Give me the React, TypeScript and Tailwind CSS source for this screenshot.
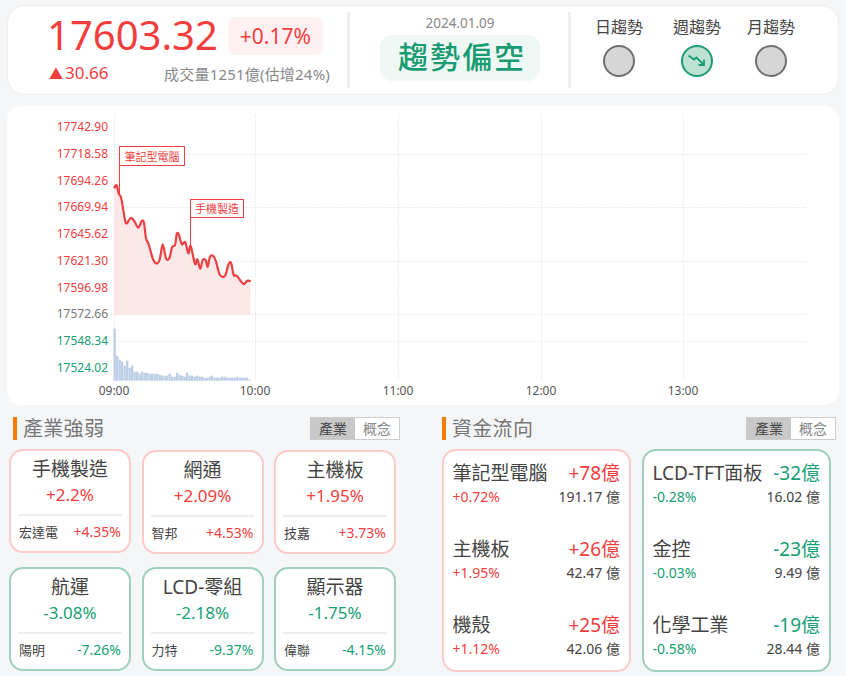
import React from 'react';

const RED = 'text-[#f23d3d]';
const GREEN = 'text-[#16a075]';

const linePts: [number, number][] = [
  [222, 235], [230, 226], [236, 250], [243, 262], [250, 300], [258, 340], [272, 324], [282, 332], [295, 353], [305, 333],
  [312, 338], [318, 385], [326, 403], [340, 450], [352, 460], [360, 445], [368, 403], [378, 445], [388, 445], [396, 412],
  [405, 405], [411, 370], [418, 378], [425, 403], [436, 397], [445, 430], [452, 408], [465, 462], [472, 448], [481, 476],
  [488, 450], [497, 450], [503, 470], [510, 440], [520, 438], [528, 455], [540, 495], [555, 497], [565, 465], [573, 458],
  [581, 495], [590, 497], [610, 522], [622, 512], [632, 514],
];
// zoomed coords -> page coords
const pts = linePts.map(([x, y]) => [40 + x / 3, 110 + y / 3]);

// smooth the price line a little (catmull-rom)
const f = (n: number) => n.toFixed(1);
const linePath = pts.reduce((d, p, i) => {
  if (i === 0) return `M${f(p[0])} ${f(p[1])}`;
  const p0 = pts[i - 2] || pts[i - 1];
  const p1 = pts[i - 1];
  const p3 = pts[i + 1] || p;
  const c1x = p1[0] + (p[0] - p0[0]) / 6;
  const c1y = p1[1] + (p[1] - p0[1]) / 6;
  const c2x = p[0] - (p3[0] - p1[0]) / 6;
  const c2y = p[1] - (p3[1] - p1[1]) / 6;
  return `${d} C${f(c1x)} ${f(c1y)} ${f(c2x)} ${f(c2y)} ${f(p[0])} ${f(p[1])}`;
}, '');
const areaPath = `${linePath} L250.7 315 L114 315 Z`;

const volumes = [52, 25, 21, 19, 15, 20, 13, 15, 9, 9, 7, 9, 8, 8, 7, 7, 7, 7, 6, 5, 5, 5, 7, 4, 4, 8, 6, 5, 4, 8, 5, 5, 4, 5, 4, 4, 3, 3, 4, 5, 3, 3, 3, 4, 4, 3, 3, 3, 3, 4, 3, 3, 3, 3, 1];

const yLabels = [
  ['17742.90', 126, '#f23d3d'], ['17718.58', 153, '#f23d3d'], ['17694.26', 180, '#f23d3d'], ['17669.94', 206, '#f23d3d'],
  ['17645.62', 233, '#f23d3d'], ['17621.30', 260, '#f23d3d'], ['17596.98', 287, '#f23d3d'], ['17572.66', 313, '#777777'],
  ['17548.34', 340, '#16a075'], ['17524.02', 367, '#16a075'],
] as const;

const timeLabels: [number, string][] = [[114, '09:00'], [255, '10:00'], [398, '11:00'], [541, '12:00'], [683, '13:00']];

function Chart() {
  return (
    <svg width="832" height="299" viewBox="7 106 832 299" className="block">
      {timeLabels.map(([x]) => (
        <line key={x} x1={x + 0.5} x2={x + 0.5} y1={114} y2={381} stroke="#ececec" strokeDasharray="2 1" />
      ))}
      {[154, 207, 261, 314, 341].map((y) => (
        <line key={y} x1={114} x2={807} y1={y + 0.5} y2={y + 0.5} stroke="#ececec" strokeDasharray="2 1" />
      ))}
      <path d={areaPath} fill="#fce8e8" />
      <path d={linePath} fill="none" stroke="#ee4040" strokeWidth="2.2" strokeLinejoin="round" />
      {volumes.map((h, i) => (
        <rect key={i} x={113.5 + i * 2.5} y={380.7 - h} width={2.3} height={h} fill="#bdcde6" />
      ))}
      {yLabels.map(([t, y, c]) => (
        <text key={t} x={108} y={y + 4.5} textAnchor="end" fontSize="12" fill={c}>{t}</text>
      ))}
      {timeLabels.map(([x, t]) => (
        <text key={t} x={x} y={395} textAnchor="middle" fontSize="12" fill="#555">{t}</text>
      ))}

      <line x1={119.5} x2={119.5} y1={165} y2={194} stroke="#ee4040" />
      <rect x={119.5} y={146.5} width={65} height={19} fill="#fff" stroke="#ee4040" />
      <text x={152} y={160.5} textAnchor="middle" fontSize="11" fill="#ee4040">筆記型電腦</text>
      <line x1={190.5} x2={190.5} y1={218} y2={248} stroke="#ee4040" />
      <rect x={190.5} y={199.5} width={53} height={18} fill="#fff" stroke="#ee4040" />
      <text x={217} y={213} textAnchor="middle" fontSize="11" fill="#ee4040">手機製造</text>
    </svg>
  );
}

function Trend({ label, active, className = '' }: { label: string; active?: boolean; className?: string }) {
  return (
    <div className={`flex flex-col items-center w-[74px] ${className}`}>
      <div className="text-[16px] leading-[20px] text-[#444]">{label}</div>
      <div className={`mt-[8px] w-[32px] h-[32px] rounded-full border-2 flex items-center justify-center ${active ? 'border-[#1a9c72] bg-[#bde2d3]' : 'border-[#6f6f6f] bg-[#d6d6d6]'}`}>
        {active && (
          <svg width="20" height="16" viewBox="0 0 20 16" fill="none" stroke="#1a9c72" strokeWidth="1.8">
            <path d="M1.5 2.5 L7 6.5 L9.5 4.5 L16.5 11.5" />
            <path d="M17 6.5 V12 H11.5" />
          </svg>
        )}
      </div>
    </div>
  );
}

function Tabs() {
  return (
    <div className="flex w-[90px] h-[23px] border border-[#ccc] text-[14px] leading-[21px] text-center">
      <div className="flex-1 bg-[#c8c8c8] text-[#444]">產業</div>
      <div className="flex-1 bg-white text-[#888]">概念</div>
    </div>
  );
}

function Heading({ title }: { title: string }) {
  return (
    <div className="flex items-center h-[23px] border-l-[4px] border-[#f57c00] pl-[6px] text-[20px] text-[#777] tracking-[0.3px]">{title}</div>
  );
}

type Card = { name: string; pct: string; stock: string; stockPct: string };

function SectorCard({ c, up, className = '' }: { c: Card; up: boolean; className?: string }) {
  return (
    <div className={`w-[122px] h-[104px] bg-white rounded-[14px] border-2 flex flex-col items-center pt-[5px] ${up ? 'border-[#fdcaca]' : 'border-[#9fd0bd]'} ${className}`}>
      <div className="text-[19px] leading-[26px] text-[#444]">{c.name}</div>
      <div className={`text-[17px] leading-[24px] mt-[1px] ${up ? RED : GREEN}`}>{c.pct}</div>
      <div className="w-[104px] h-[2px] bg-[#eeeeee] mt-[7px]" />
      <div className="w-[104px] flex justify-between items-center mt-[6px] leading-[20px]">
        <span className="text-[13px] text-[#444] pl-[1px]">{c.stock}</span>
        <span className={`text-[14px] pr-[1px] ${up ? RED : GREEN}`}>{c.stockPct}</span>
      </div>
    </div>
  );
}

function FlowCard({ rows, up }: { rows: string[][]; up: boolean }) {
  return (
    <div className={`w-[189px] h-[223px] bg-white rounded-[14px] border-2 flex flex-col justify-between pt-[8px] pb-[11px] pl-[8.5px] pr-[9px] ${up ? 'border-[#fdcaca]' : 'border-[#9fd0bd]'}`}>
      {rows.map(([name, amt, pct, vol]) => (
        <div key={name}>
          <div className="flex justify-between items-center leading-[28px]">
            <span className="text-[19px] text-[#444] whitespace-nowrap">{name}</span>
            <span className={`text-[19px] whitespace-nowrap ${up ? RED : GREEN}`}>{amt}</span>
          </div>
          <div className="flex justify-between items-center leading-[20px]">
            <span className={`text-[14px] ${up ? RED : GREEN}`}>{pct}</span>
            <span className="text-[14px] text-[#444]">{vol} 億</span>
          </div>
        </div>
      ))}
    </div>
  );
}

const ups: Card[] = [
  { name: '手機製造', pct: '+2.2%', stock: '宏達電', stockPct: '+4.35%' },
  { name: '網通', pct: '+2.09%', stock: '智邦', stockPct: '+4.53%' },
  { name: '主機板', pct: '+1.95%', stock: '技嘉', stockPct: '+3.73%' },
];
const downs: Card[] = [
  { name: '航運', pct: '-3.08%', stock: '陽明', stockPct: '-7.26%' },
  { name: 'LCD-零組', pct: '-2.18%', stock: '力特', stockPct: '-9.37%' },
  { name: '顯示器', pct: '-1.75%', stock: '偉聯', stockPct: '-4.15%' },
];

export default function App() {
  return (
    <div
      className="w-[846px] h-[676px] overflow-hidden bg-[#f5f6f8] pt-[5px] px-[7px]"
      style={{ fontFamily: '"Noto Sans", "Noto Sans CJK TC", sans-serif' }}
    >
      {/* Top summary */}
      <div className="h-[90px] bg-white rounded-[18px] border border-[#eeeeee] flex items-center">
        <div className="w-[342px] h-[76px] border-r-[3px] border-[#eeeeee] pl-[39px] pr-[17px]">
          <div className="flex items-center h-[46px]">
            <span className={`text-[40px] leading-[46px] ${RED}`}>17603.32</span>
            <span className={`ml-[10px] w-[95px] h-[38px] mt-[1px] rounded-lg bg-[#fff1f1] text-[21px] leading-[38px] text-center ${RED}`}>+0.17%</span>
          </div>
          <div className="flex justify-between items-center mt-[3px] leading-[24px]">
            <span className={`text-[17px] ml-[2px] ${RED}`}><span className="text-[14px] mr-[2px]">▲</span>30.66</span>
            <span className="text-[15px] tracking-[0.2px] text-[#888]">成交量1251億(估增24%)</span>
          </div>
        </div>
        <div className="w-[221px] h-[76px] border-r-[3px] border-[#eeeeee] flex flex-col items-center">
          <div className="text-[13.5px] leading-[22px] text-[#888] ml-[2px]">2024.01.09</div>
          <div className="mt-[1px] w-[160px] h-[46px] rounded-xl bg-[#f0f8f5] text-[30px] leading-[44px] text-center font-medium tracking-[2px] text-[#1a9c72] ml-[2px] pl-[4px]">趨勢偏空</div>
        </div>
        <div className="flex ml-[11px] h-[76px] pt-[5px]">
          <Trend label="日趨勢" />
          <Trend label="週趨勢" active className="ml-[4px]" />
          <Trend label="月趨勢" />
        </div>
      </div>

      {/* Chart */}
      <div className="mt-[11px] h-[299px] bg-white rounded-[14px] overflow-hidden">
        <Chart />
      </div>

      {/* Bottom panels */}
      <div className="flex mt-[12px]">
        <div className="w-[435px]">
          <div className="flex justify-between w-[393px] pl-[6px]">
            <Heading title="產業強弱" />
            <Tabs />
          </div>
          <div className="pl-[2px] mt-[9px] flex gap-[10.5px]">
            {ups.map((c, i) => <SectorCard key={c.name} c={c} up className={i ? 'mt-px' : ''} />)}
          </div>
          <div className="pl-[2px] mt-[13px] flex gap-[10.5px]">
            {downs.map((c) => <SectorCard key={c.name} c={c} up={false} />)}
          </div>
        </div>
        <div className="w-[394px]">
          <div className="flex justify-between">
            <Heading title="資金流向" />
            <Tabs />
          </div>
          <div className="mt-[9px] flex gap-[11px]">
            <FlowCard up rows={[
              ['筆記型電腦', '+78億', '+0.72%', '191.17'],
              ['主機板', '+26億', '+1.95%', '42.47'],
              ['機殼', '+25億', '+1.12%', '42.06'],
            ]} />
            <FlowCard up={false} rows={[
              ['LCD-TFT面板', '-32億', '-0.28%', '16.02'],
              ['金控', '-23億', '-0.03%', '9.49'],
              ['化學工業', '-19億', '-0.58%', '28.44'],
            ]} />
          </div>
        </div>
      </div>
    </div>
  );
}
